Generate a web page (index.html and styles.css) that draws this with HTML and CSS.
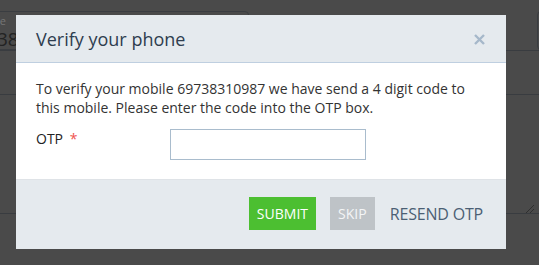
FILE: index.html
```html
<!DOCTYPE html>
<html>
<head>
<meta charset="utf-8">
<link rel="stylesheet" href="styles.css">
</head>
<body>
<div class="page">
  <div class="row-top">
    <div class="field field-a">
      <span class="field-label">Phone</span>
      <span class="field-value">38</span>
    </div>
    <div class="field field-b"></div>
  </div>
  <div class="rule"></div>
  <div class="stray">Verify</div>
  <div class="gap-a"></div>
  <div class="rule"></div>
  <div class="gap-b"></div>
  <div class="rule rule-handle"><span class="handle"></span></div>
</div>

<div class="modal">
  <div class="modal-header">
    <h4 class="modal-title">Verify your phone</h4>
    <button class="close" aria-label="Close">
      <svg width="11" height="11" viewBox="0 0 11 11"><path d="M1 1L10 10M10 1L1 10" stroke="#a6b8ca" stroke-width="2.4" stroke-linecap="butt"/></svg>
    </button>
  </div>
  <div class="modal-body">
    <p class="msg">To verify your mobile 69738310987 we have send a 4 digit code to<br>this mobile. Please enter the code into the OTP box.</p>
    <div class="form-row">
      <label class="otp-label">OTP <span class="req">*</span></label>
      <input class="otp-input" type="text">
    </div>
  </div>
  <div class="modal-footer">
    <button class="btn btn-submit">SUBMIT</button>
    <button class="btn btn-skip">SKIP</button>
    <button class="btn btn-link">RESEND OTP</button>
  </div>
</div>
</body>
</html>
```

FILE: styles.css
```css
html, body {
  margin: 0;
  padding: 0;
  width: 539px;
  height: 265px;
  overflow: hidden;
  background: #4a4a4a;
  font-family: "Open Sans", "Liberation Sans", sans-serif;
}

.page {
  padding-top: 11px;
}

.row-top {
  display: flex;
  gap: 288px;
  height: 39px;
}

.field {
  box-sizing: border-box;
  height: 39px;
  border: 1px solid #3a3d41;
  border-radius: 4px;
  flex: none;
}

.field-a {
  width: 260px;
  margin-left: -11px;
  overflow: hidden;
}

.field-label {
  display: block;
  font-size: 11px;
  line-height: 12px;
  color: #767676;
  padding: 3px 0 0 0;
  margin-left: -17px;
}

.field-value {
  display: block;
  font-size: 19px;
  line-height: 20px;
  color: #232323;
  margin: 2px 0 0 7px;
}

.field-b {
  width: 40px;
}

.rule {
  height: 1px;
  background: #393c40;
}

.stray {
  font-size: 13px;
  line-height: 14px;
  color: #262626;
  margin: 3px 0 0 -36px;
}

.gap-a {
  height: 26px;
}

.gap-b {
  height: 118px;
}

.rule-handle {
  position: relative;
}

.handle {
  position: absolute;
  right: 5px;
  bottom: 1px;
  width: 8px;
  height: 8px;
  background: linear-gradient(135deg, transparent 45%, #2f2f2f 45%, #2f2f2f 55%, transparent 55%, transparent 70%, #2f2f2f 70%, #2f2f2f 80%, transparent 80%);
}

.modal {
  position: fixed;
  left: 16px;
  top: 15px;
  width: 490px;
  background: #fff;
}

.modal-header {
  box-sizing: border-box;
  height: 48px;
  background: #e5eaee;
  border-bottom: 1px solid #bfcfe0;
  display: flex;
  align-items: center;
  justify-content: space-between;
  padding: 0 21px 0 20px;
}

.modal-title {
  margin: 0;
  font-size: 18px;
  font-weight: 400;
  color: #2e3d4f;
  line-height: 24px;
}

.close {
  border: 0;
  background: none;
  padding: 0;
  width: 11px;
  height: 11px;
  display: flex;
  margin-top: 2px;
}

.modal-body {
  padding: 17px 20px 19px 20px;
  color: #333;
  font-size: 14px;
  line-height: 18.5px;
}

.msg {
  margin: 0 0 12px 0;
  white-space: nowrap;
}

.form-row {
  display: flex;
  align-items: flex-start;
}

.otp-label {
  width: 134px;
  font-size: 14px;
  line-height: 20px;
  color: #222;
}

.req {
  color: #ef5350;
  margin-left: 3px;
}

.otp-input {
  box-sizing: border-box;
  width: 196px;
  height: 31px;
  border: 1px solid #a9bccd;
  margin: 0;
  padding: 0 6px;
  outline: none;
}

.modal-footer {
  box-sizing: border-box;
  height: 70px;
  background: #e5eaee;
  border-top: 1px solid #dfe3e7;
  display: flex;
  justify-content: flex-end;
  align-items: flex-start;
  padding: 17px 23px 0 0;
}

.btn {
  border: 0;
  margin: 0;
  font-family: "Open Sans", "Liberation Sans", sans-serif;
  font-size: 14px;
  height: 33px;
  padding: 0 8px;
  color: #fff;
}

.btn-submit {
  background: #4cbf31;
  width: 67px;
}

.btn-skip {
  background: #bec3c7;
  color: #f4f5f6;
  width: 45px;
  margin-left: 14px;
}

.btn-link {
  background: none;
  color: #4b5f74;
  font-size: 16px;
  letter-spacing: -0.2px;
  padding: 0;
  margin-left: 15px;
}
```
